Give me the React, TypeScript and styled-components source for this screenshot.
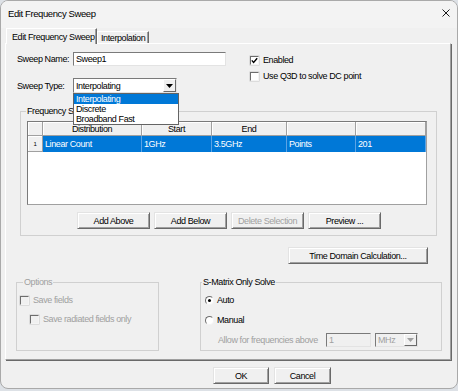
import React from "react";
import styled, { createGlobalStyle } from "styled-components";

const GlobalStyle = createGlobalStyle`
    html, body {
        margin: 0;
        padding: 0;
    }
    body {
        width: 458px;
        height: 391px;
        overflow: hidden;
        background: #dde1e6;
        font-family: "Liberation Sans", Arial, sans-serif;
        font-size: 9px;
        letter-spacing: -0.4px;
        color: #000;
        white-space: nowrap;
    }
`;

const Window = styled.div`
    box-sizing: border-box;
    width: 458px;
    height: 389px;
    border: 1px solid #a9a9a9;
    border-radius: 8px;
    background: #f0f0f0;
    display: flex;
    flex-direction: column;
    overflow: hidden;
`;

const TitleBar = styled.div`
    flex: none;
    box-sizing: border-box;
    height: 27px;
    padding: 0 7px 3px 7px;
    display: flex;
    align-items: center;
    justify-content: space-between;
    background: #f3f3f3;
`;

const Title = styled.span`
    font-size: 9.5px;
`;

const TabStrip = styled.div`
    flex: none;
    height: 15px;
    padding-left: 5px;
    display: flex;
    align-items: flex-end;
`;

const Tab = styled.div<{ $active?: boolean; $width: number }>`
    box-sizing: border-box;
    position: relative;
    z-index: 1;
    width: ${(p) => p.$width}px;
    height: ${(p) => (p.$active ? 16 : 12)}px;
    margin-bottom: ${(p) => (p.$active ? -1 : 0)}px;
    padding-left: ${(p) => (p.$active ? 5 : 3)}px;
    display: flex;
    align-items: center;
    background: #f0f0f0;
    border-top: 1px solid #fff;
    border-left: 1px solid #fff;
    border-right: 1px solid #696969;
    box-shadow: inset -1px 0 0 #a0a0a0;
`;

const Panel = styled.div`
    flex: none;
    box-sizing: border-box;
    height: 317px;
    margin: 0 6px 0 4px;
    border-top: 1px solid #fff;
    border-left: 1px solid #fff;
    border-right: 1px solid #a0a0a0;
    border-bottom: 1px solid #a0a0a0;
    box-shadow: 1px 1px 0 #696969;
    display: flex;
    flex-direction: column;
    align-items: flex-start;
`;

const TopSection = styled.div`
    margin-top: 8px;
    padding-left: 11px;
    display: flex;
`;

const LeftFields = styled.div`
    width: 209px;
    display: flex;
    flex-direction: column;
    gap: 12px;
`;

const FieldRow = styled.div`
    display: flex;
    align-items: center;
`;

const FieldLabel = styled.span`
    width: 56px;
`;

const TextInput = styled.div<{ $width: number; $disabled?: boolean }>`
    box-sizing: border-box;
    width: ${(p) => p.$width}px;
    height: 14px;
    padding-left: 2px;
    line-height: 12px;
    border: 1px solid;
    border-color: #7a7a7a #e3e3e3 #e3e3e3 #7a7a7a;
    background: ${(p) => (p.$disabled ? "#f0f0f0" : "#fff")};
    color: ${(p) => (p.$disabled ? "#a0a0a0" : "#000")};
`;

const SelectWrap = styled.div`
    position: relative;
`;

const SelectBox = styled.div<{ $width: number; $disabled?: boolean }>`
    box-sizing: border-box;
    width: ${(p) => p.$width}px;
    height: ${(p) => (p.$disabled ? 14 : 15)}px;
    display: flex;
    border: 1px solid;
    border-color: #7a7a7a #e3e3e3 #e3e3e3 #7a7a7a;
    background: ${(p) => (p.$disabled ? "#f0f0f0" : "#fff")};
    color: ${(p) => (p.$disabled ? "#a0a0a0" : "#000")};
`;

const SelectText = styled.span`
    flex: 1;
    padding-left: 2px;
    display: flex;
    align-items: center;
`;

const ArrowButton = styled.span`
    box-sizing: border-box;
    width: 13px;
    display: flex;
    align-items: center;
    justify-content: center;
    background: #f0f0f0;
    border: 1px solid;
    border-color: #fff #696969 #696969 #fff;
`;

const DropList = styled.div`
    position: absolute;
    top: 100%;
    left: 0;
    z-index: 5;
    box-sizing: border-box;
    width: 106px;
    background: #fff;
    border: 1px solid #646464;
`;

const DropItem = styled.div<{ $selected?: boolean }>`
    height: 10px;
    line-height: 10px;
    padding-left: 2px;
    background: ${(p) => (p.$selected ? "#0078d7" : "transparent")};
    color: ${(p) => (p.$selected ? "#fff" : "#000")};
`;

const RightChecks = styled.div`
    margin-left: 24px;
    display: flex;
    flex-direction: column;
`;

const CheckRow = styled.label<{ $disabled?: boolean; $indent?: number }>`
    height: ${(p) => (p.$indent !== undefined ? 12 : 16)}px;
    padding-left: ${(p) => p.$indent ?? 0}px;
    display: flex;
    align-items: center;
    gap: 4px;
    color: ${(p) => (p.$disabled ? "#a0a0a0" : "#000")};
`;

const Box = styled.span<{ $disabled?: boolean }>`
    box-sizing: border-box;
    width: 9px;
    height: 9px;
    display: flex;
    align-items: center;
    justify-content: center;
    border: 1px solid;
    border-color: #6d6d6d #f4f4f4 #f4f4f4 #6d6d6d;
    box-shadow: 0 0 0 0.5px #c8c8c8;
    background: ${(p) => (p.$disabled ? "#f0f0f0" : "#fff")};
`;

const Radio = styled.span<{ $checked?: boolean }>`
    box-sizing: border-box;
    width: 9px;
    height: 9px;
    border-radius: 50%;
    display: flex;
    align-items: center;
    justify-content: center;
    border: 1px solid;
    border-color: #6d6d6d #f4f4f4 #f4f4f4 #6d6d6d;
    background: #fff;

    &::after {
        content: "";
        width: 3px;
        height: 3px;
        border-radius: 50%;
        background: ${(p) => (p.$checked ? "#000" : "transparent")};
    }
`;

const Group = styled.fieldset<{ $width: number; $height?: number }>`
    box-sizing: border-box;
    width: ${(p) => p.$width}px;
    ${(p) => (p.$height ? `height: ${p.$height}px;` : "")}
    margin: 0;
    padding: 0;
    min-width: 0;
    border: 1px solid #d0d0d0;
`;

const Legend = styled.legend<{ $offset: number; $disabled?: boolean }>`
    margin-left: ${(p) => p.$offset}px;
    padding: 0 1px;
    line-height: 12px;
    color: ${(p) => (p.$disabled ? "#a0a0a0" : "#000")};
`;

const FreqGroup = styled(Group)`
    margin: 12px 0 0 14px;
`;

const FreqBody = styled.div`
    padding: 4px 8px 6px 6px;
`;

const Table = styled.div`
    box-sizing: border-box;
    width: 400px;
    height: 84px;
    display: grid;
    grid-template-columns: 15px 99px 70px 75px 69px 70px;
    grid-template-rows: 14px 16px;
    align-content: start;
    background: #fff;
    border: 1px solid;
    border-color: #7a7a7a #a0a0a0 #a0a0a0 #7a7a7a;
`;

const HeadCell = styled.div<{ $small?: boolean }>`
    box-sizing: border-box;
    display: flex;
    align-items: center;
    justify-content: center;
    background: #f0f0f0;
    border-right: 1px solid #a0a0a0;
    border-bottom: 1px solid #a0a0a0;
    box-shadow: inset 1px 1px 0 #fff;
    font-size: ${(p) => (p.$small ? 6 : 9)}px;
`;

const DataCell = styled.div`
    box-sizing: border-box;
    padding-left: 2px;
    display: flex;
    align-items: center;
    background: #0078d7;
    color: #fff;
    border-right: 1px solid #5ca3e4;
`;

const ButtonRow = styled.div`
    margin-top: 7px;
    padding-left: 50px;
    display: flex;
    gap: 4px;
`;

const Button = styled.button<{ $width: number }>`
    box-sizing: border-box;
    width: ${(p) => p.$width}px;
    height: 17px;
    padding: 0;
    font: inherit;
    letter-spacing: inherit;
    color: #000;
    background: #f0f0f0;
    border: 1px solid;
    border-color: #e3e3e3 #696969 #696969 #e3e3e3;
    box-shadow: inset 1px 1px 0 #fff, inset -1px -1px 0 #a0a0a0;

    &:disabled {
        color: #a0a0a0;
    }
`;

const TimeButton = styled(Button)`
    align-self: flex-end;
    margin: 11px 22px 0 0;
`;

const BottomGroups = styled.div`
    margin-top: 12px;
    padding-left: 10px;
    display: flex;
    gap: 41px;
`;

const GroupBody = styled.div<{ $left: number }>`
    padding: 6px 0 0 ${(p) => p.$left}px;
    display: flex;
    flex-direction: column;
`;

const OptionList = styled.div<{ $gap: number }>`
    display: flex;
    flex-direction: column;
    gap: ${(p) => p.$gap}px;
`;

const RadioRow = styled.label`
    height: 12px;
    display: flex;
    align-items: center;
    gap: 3px;
`;

const AllowRow = styled.div`
    margin-top: 7px;
    padding-left: 13px;
    display: flex;
    align-items: center;
    gap: 4px;
    color: #a0a0a0;
`;

const AllowLabel = styled.span`
    width: 104px;
`;

const Footer = styled.div`
    margin-top: 7px;
    padding-left: 212px;
    display: flex;
    gap: 5px;
`;

function DownArrow({ color = "#000" }: { color?: string }) {
    return (
        <svg width="7" height="4" viewBox="0 0 7 4">
            <polygon points="0,0 7,0 3.5,4" fill={color} />
        </svg>
    );
}

function CheckBox({ checked, disabled }: { checked?: boolean; disabled?: boolean }) {
    return (
        <Box $disabled={disabled}>
            {checked && (
                <svg width="7" height="7" viewBox="0 0 7 7">
                    <polyline points="0.8,3.4 2.6,5.4 6.2,1.2" fill="none" stroke="#000" strokeWidth="1.4" />
                </svg>
            )}
        </Box>
    );
}

const columns = ["Distribution", "Start", "End", "", ""];
const row = ["Linear Count", "1GHz", "3.5GHz", "Points", "201"];

export default function App() {
    return (
        <>
            <GlobalStyle />
            <Window>
                <TitleBar>
                    <Title>Edit Frequency Sweep</Title>
                    <svg width="8" height="8" viewBox="0 0 8 8">
                        <path d="M0.5 0.5 L7.5 7.5 M7.5 0.5 L0.5 7.5" stroke="#000" strokeWidth="0.9" />
                    </svg>
                </TitleBar>

                <TabStrip>
                    <Tab $active $width={91}>Edit Frequency Sweep</Tab>
                    <Tab $width={52}>Interpolation</Tab>
                </TabStrip>

                <Panel>
                    <TopSection>
                        <LeftFields>
                            <FieldRow>
                                <FieldLabel>Sweep Name:</FieldLabel>
                                <TextInput $width={153}>Sweep1</TextInput>
                            </FieldRow>
                            <FieldRow>
                                <FieldLabel>Sweep Type:</FieldLabel>
                                <SelectWrap>
                                    <SelectBox $width={104}>
                                        <SelectText>Interpolating</SelectText>
                                        <ArrowButton>
                                            <DownArrow />
                                        </ArrowButton>
                                    </SelectBox>
                                    <DropList>
                                        <DropItem $selected>Interpolating</DropItem>
                                        <DropItem>Discrete</DropItem>
                                        <DropItem>Broadband Fast</DropItem>
                                    </DropList>
                                </SelectWrap>
                            </FieldRow>
                        </LeftFields>
                        <RightChecks>
                            <CheckRow>
                                <CheckBox checked />
                                Enabled
                            </CheckRow>
                            <CheckRow>
                                <CheckBox />
                                Use Q3D to solve DC point
                            </CheckRow>
                        </RightChecks>
                    </TopSection>

                    <FreqGroup $width={417}>
                        <Legend $offset={5}>Frequency Setup</Legend>
                        <FreqBody>
                            <Table>
                                <HeadCell />
                                {columns.map((c, i) => (
                                    <HeadCell key={i}>{c}</HeadCell>
                                ))}
                                <HeadCell $small>1</HeadCell>
                                {row.map((v, i) => (
                                    <DataCell key={i}>{v}</DataCell>
                                ))}
                            </Table>
                            <ButtonRow>
                                <Button $width={73}>Add Above</Button>
                                <Button $width={73}>Add Below</Button>
                                <Button $width={73} disabled>Delete Selection</Button>
                                <Button $width={73}>Preview ...</Button>
                            </ButtonRow>
                        </FreqBody>
                    </FreqGroup>

                    <TimeButton $width={140}>Time Domain Calculation...</TimeButton>

                    <BottomGroups>
                        <Group $width={143} $height={75}>
                            <Legend $offset={6} $disabled>Options</Legend>
                            <GroupBody $left={3}>
                                <OptionList $gap={7}>
                                    <CheckRow $disabled $indent={0}>
                                        <CheckBox disabled />
                                        Save fields
                                    </CheckRow>
                                    <CheckRow $disabled $indent={10}>
                                        <CheckBox disabled />
                                        Save radiated fields only
                                    </CheckRow>
                                </OptionList>
                            </GroupBody>
                        </Group>

                        <Group $width={242} $height={75}>
                            <Legend $offset={1}>S-Matrix Only Solve</Legend>
                            <GroupBody $left={4}>
                                <OptionList $gap={8}>
                                    <RadioRow>
                                        <Radio $checked />
                                        Auto
                                    </RadioRow>
                                    <RadioRow>
                                        <Radio />
                                        Manual
                                    </RadioRow>
                                </OptionList>
                                <AllowRow>
                                    <AllowLabel>Allow for frequencies above</AllowLabel>
                                    <TextInput $width={45} $disabled>1</TextInput>
                                    <SelectBox $width={43} $disabled>
                                        <SelectText>MHz</SelectText>
                                        <ArrowButton>
                                            <DownArrow color="#a0a0a0" />
                                        </ArrowButton>
                                    </SelectBox>
                                </AllowRow>
                            </GroupBody>
                        </Group>
                    </BottomGroups>
                </Panel>

                <Footer>
                    <Button $width={56}>OK</Button>
                    <Button $width={57}>Cancel</Button>
                </Footer>
            </Window>
        </>
    );
}
